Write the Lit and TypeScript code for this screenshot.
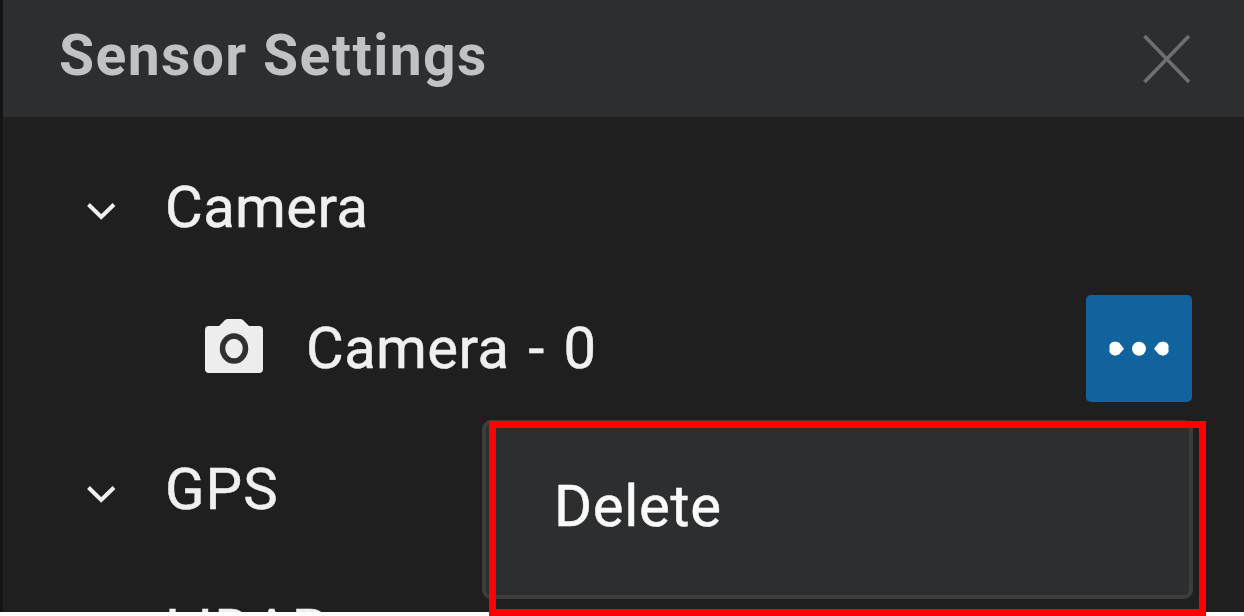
import { LitElement, html, css, svg } from "lit";
import { customElement } from "lit/decorators.js";

const chevron = html`<svg class="chevron" width="32" height="24" viewBox="0 0 32 24">
  ${svg`<path d="M3.5 4.5 L16.2 17 L29 4.5" fill="none" stroke="currentColor" stroke-width="4"/>`}
</svg>`;

@customElement("app-root")
export class AppRoot extends LitElement {
  static styles = css`
    :host {
      display: block;
      position: relative;
      height: 616px;
      overflow: hidden;
      background: #fff;
      font-family: Roboto, sans-serif;
      color: #f0f0f0;
    }
    .panel {
      box-sizing: border-box;
      height: 612px;
      overflow: hidden;
      border-left: 3px solid #141414;
      background: #1f1f1f;
    }
    .header {
      display: flex;
      align-items: center;
      justify-content: space-between;
      box-sizing: border-box;
      height: 117px;
      padding: 0 53px 0 56px;
      background: #2d2e30;
    }
    .title {
      margin: 0;
      padding-bottom: 5px;
      font-size: 57px;
      line-height: 68px;
      font-weight: 700;
      letter-spacing: 1.4px;
      color: #bfc3c5;
    }
    .close {
      display: block;
      color: #6d6f70;
    }
    .tree {
      display: flex;
      flex-direction: column;
      padding-top: 20px;
    }
    .row {
      display: flex;
      align-items: center;
      flex: none;
      box-sizing: border-box;
      height: 141px;
      padding: 0 52px 0 82px;
    }
    .row.child {
      padding-left: 199px;
    }
    .chevron {
      flex: none;
      margin: 8px 48px 0 0;
    }
    .row.child ~ .row .chevron {
      margin-top: 11px;
    }
    .label {
      padding-bottom: 1px;
      font-size: 58px;
      line-height: 68px;
      letter-spacing: 0.4px;
      word-spacing: 4px;
      white-space: pre;
      -webkit-text-stroke: 0.5px currentColor;
    }
    .label.caps {
      letter-spacing: 1.1px;
    }
    .menu .label {
      padding-bottom: 3px;
      letter-spacing: 0.7px;
    }
    .camera {
      flex: none;
      margin: -5px 40px 0 0;
    }
    .more {
      display: flex;
      align-items: center;
      justify-content: center;
      margin-left: auto;
      width: 106px;
      height: 107px;
      padding: 0;
      border: 0;
      border-radius: 5px;
      background: #11639d;
    }
    .menu {
      position: absolute;
      left: 482px;
      top: 420px;
      display: flex;
      align-items: center;
      box-sizing: border-box;
      width: 711px;
      height: 179px;
      padding: 0 0 4px 68px;
      border: 4px solid #3d3d3e;
      border-radius: 9px;
      background: #2d2e30;
      color: #fafafa;
    }
    .highlight {
      position: absolute;
      left: 489px;
      top: 421px;
      box-sizing: border-box;
      width: 717px;
      height: 195px;
      border: 7px solid #f00;
    }
  `;

  render() {
    return html`
      <div class="panel">
        <div class="header">
          <h1 class="title">Sensor Settings</h1>
          <svg class="close" width="48" height="50" viewBox="0 0 48 50">
            <path d="M1.5 2 L46 48 M46 2 L1.5 48" fill="none" stroke="currentColor" stroke-width="3.6" />
          </svg>
        </div>
        <div class="tree">
          <div class="row">${chevron}<span class="label">Camera</span></div>
          <div class="row child">
            <svg class="camera" width="64" height="60" viewBox="0 0 64 60">
              <path
                d="M7 10 H17 L23 4 Q24 3 26 3 H38 Q40 3 41 4 L47 10 H57 Q61 10 61 14 V53 Q61 57 57 57 H7 Q3 57 3 53 V14 Q3 10 7 10 Z"
                fill="#ededed"
              />
              <ellipse cx="32" cy="32.5" rx="11.5" ry="12.5" fill="#ededed" stroke="#303030" stroke-width="5.5" />
            </svg>
            <span class="label">Camera - 0</span>
            <button class="more" aria-label="More">
              <svg width="64" height="20" viewBox="0 0 64 20">
                <g fill="#fff">
                  <path d="M4.5 3.5 L8 2.5 L12 3.5 L17 9.7 L12 15.5 L8 16.8 L4.5 15.5 L2.5 13 V6 Z" />
                  <circle cx="32" cy="9.7" r="7" />
                  <path d="M59.5 3.5 L56 2.5 L52 3.5 L47 9.7 L52 15.5 L56 16.8 L59.5 15.5 L61.5 13 V6 Z" />
                </g>
              </svg>
            </button>
          </div>
          <div class="row">${chevron}<span class="label caps">GPS</span></div>
          <div class="row">${chevron}<span class="label caps">LIDAR</span></div>
        </div>
      </div>
      <div class="menu"><span class="label">Delete</span></div>
      <div class="highlight"></div>
    `;
  }
}
